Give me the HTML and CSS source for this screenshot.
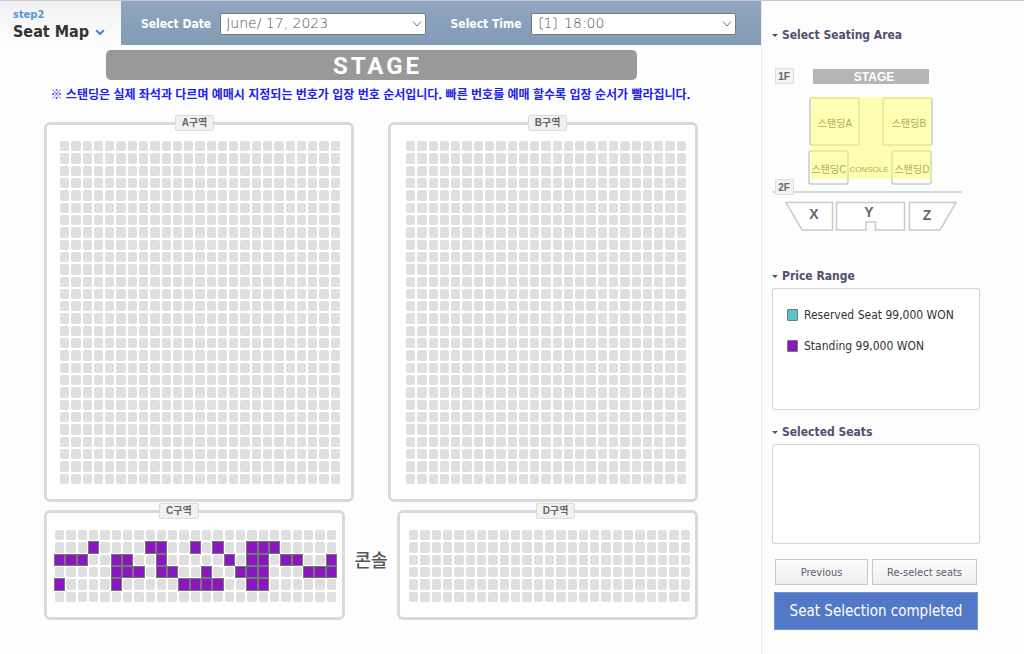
FILE: index.html
```html
<!DOCTYPE html>
<html lang="en">
<head>
<meta charset="utf-8">
<title>Seat Map</title>
<link rel="stylesheet" href="styles.css">
</head>
<body>
<div class="page">
  <main class="main">
    <header class="topbar">
      <h1 class="step">
        <span class="step-number">step2</span>
        <span class="step-title">Seat Map
          <svg class="step-arrow" viewBox="0 0 10 7" aria-hidden="true"><path d="M1.2 1.2 5 5l3.800-3.800" fill="none" stroke="#4a80cf" stroke-width="2"/></svg>
        </span>
      </h1>
      <form class="filters">
        <label class="filter-label" for="date">Select Date</label>
        <select class="filter-select" id="date"><option>June/ 17, 2023</option></select>
        <label class="filter-label" for="time">Select Time</label>
        <select class="filter-select" id="time"><option>〔1〕 18:00</option></select>
      </form>
    </header>

    <div class="stage">STAGE</div>
    <p class="notice" lang="ko">※ 스탠딩은 실제 좌석과 다르며 예매시 지정되는 번호가 입장 번호 순서입니다. 빠른 번호를 예매 할수록 입장 순서가 빨라집니다.</p>

    <div class="halls">
      <div class="hall-row hall-row-front">
        <section class="zone zone-large">
          <h2 class="zone-tag zone-tag-a" lang="ko">A구역</h2>
          <div class="seats seats-large" data-rows="28"></div>
        </section>
        <section class="zone zone-large zone-right">
          <h2 class="zone-tag zone-tag-b" lang="ko">B구역</h2>
          <div class="seats seats-large" data-rows="28"></div>
        </section>
      </div>
      <div class="hall-row">
        <section class="zone zone-small">
          <h2 class="zone-tag zone-tag-c" lang="ko">C구역</h2>
          <div class="seats seats-small" data-rows="6" data-open="1:3,8,9,12,14,17,18,19;2:0,1,2,5,6,9,15,17,18,20,21,24;3:5,6,7,9,10,13,16,17,18,22,23,24;4:0,5,11,12,13,14,17,18"></div>
        </section>
        <div class="console" lang="ko">콘솔</div>
        <section class="zone zone-small zone-small-right">
          <h2 class="zone-tag zone-tag-d" lang="ko">D구역</h2>
          <div class="seats seats-small" data-rows="6"></div>
        </section>
      </div>
    </div>
  </main>

  <aside class="sidebar">
    <h2 class="side-title">Select Seating Area</h2>
    <svg class="area-map" viewBox="0 0 194 172" role="img" aria-label="Seating areas">
      <rect x="41" y="5" width="116" height="15" fill="#b5b5b5"/>
      <text class="map-stage" x="102" y="17">STAGE</text>
      <g fill="#fff" stroke="#cacaca" stroke-width="1.500">
        <rect x="38" y="34" width="49" height="47" rx="2"/>
        <rect x="111" y="34" width="49" height="47" rx="2"/>
        <rect x="37" y="87" width="39" height="33" rx="2"/>
        <rect x="120" y="87" width="39" height="33" rx="2"/>
        <path d="M0 128H190"/>
        <path d="M14 138.500H60.500V166H30Z"/>
        <path d="M64.500 138.500H132.500V166H103.500V158H94V166H64.500Z"/>
        <path d="M137.500 138.500H184L168 166H137.500Z"/>
      </g>
      <g class="map-zone">
        <text x="63" y="63">스탠딩A</text>
        <text x="137" y="63">스탠딩B</text>
        <text x="57" y="109">스탠딩C</text>
        <text x="140" y="109">스탠딩D</text>
        <text class="map-console" x="97" y="108">CONSOLE</text>
      </g>
      <rect x="39" y="33" width="120" height="82" fill="#ffff64" opacity="0.500"/>
      <g class="map-block">
        <text x="42" y="155">X</text>
        <text x="97" y="153">Y</text>
        <text x="155" y="156">Z</text>
      </g>
      <g fill="#f2f2f2" stroke="#dedede">
        <rect x="3.500" y="4.500" width="18" height="15"/>
        <rect x="3.500" y="115.500" width="18" height="15"/>
      </g>
      <g class="map-floor">
        <text x="12" y="16">1F</text>
        <text x="12" y="127">2F</text>
      </g>
    </svg>

    <h2 class="side-title">Price Range</h2>
    <ul class="box prices">
      <li class="price"><span class="swatch swatch-reserved"></span>Reserved Seat 99,000 WON</li>
      <li class="price"><span class="swatch swatch-standing"></span>Standing 99,000 WON</li>
    </ul>

    <h2 class="side-title">Selected Seats</h2>
    <div class="box selected"></div>

    <div class="actions">
      <button class="btn btn-previous" type="button">Previous</button>
      <button class="btn btn-reselect" type="button">Re-select seats</button>
    </div>
    <button class="btn-complete" type="button">Seat Selection completed</button>
  </aside>
</div>
<script src="seats.js"></script>
</body>
</html>
```
FILE: styles.css
```css
* { box-sizing: border-box; }

body {
  margin: 0;
  background: #fdfdfd;
  color: #333;
  font-family: "DejaVu Sans Condensed", "DejaVu Sans", "Noto Sans CJK KR", sans-serif;
  font-size: 12px;
}

h1, h2, p, ul { margin: 0; padding: 0; }
button, select { font-family: inherit; }

.page {
  display: flex;
  min-height: 100vh;
  border-top: 1px solid #c9c9c9;
}

.main { flex: 1; min-width: 0; }

.topbar {
  display: flex;
  height: 44px;
  background: linear-gradient(#8fa5c1, #849bb4);
}

.step {
  width: 121px;
  padding: 7px 0 0 13px;
  background: linear-gradient(#f1f1f3, #fdfdfd);
  line-height: 16px;
}
.step-number { display: block; color: #5a94d0; font-size: 11px; line-height: 14px; }
.step-title { display: flex; align-items: center; gap: 6px; font-size: 16px; line-height: 20px; white-space: nowrap; }
.step-arrow { width: 10px; height: 7px; }

.filters { flex: 1; display: flex; align-items: center; padding: 1px 25px 0 20px; }
.filter-label { color: #fff; font-size: 12px; font-weight: bold; white-space: nowrap; }
.filter-select {
  flex: 1;
  min-width: 0;
  height: 22px;
  margin: 0 0 0 9px;
  padding: 0 24px 2px 5px;
  border: 1px solid #77797c;
  border-radius: 2px;
  appearance: none;
  color: #555;
  font-family: "DejaVu Sans Light", "DejaVu Sans", "Noto Sans CJK KR", sans-serif;
  font-size: 14px;
  font-weight: 200;
  font-feature-settings: "halt";
  background: #fff url("data:image/svg+xml,%3Csvg xmlns='http://www.w3.org/2000/svg' width='10' height='6'%3E%3Cpath d='M1 .5 5 5 9 .5' fill='none' stroke='%23777'/%3E%3C/svg%3E") no-repeat right 3px center;
}
.filter-select + .filter-label { margin-left: 25px; }

.stage {
  margin: 5px 124px 0 106px;
  border-radius: 5px;
  background: #999;
  color: #fff;
  font-family: Roboto, sans-serif;
  font-size: 24px;
  font-weight: bold;
  letter-spacing: 3px;
  line-height: 28px;
  padding: 2px 0 0 12px;
  text-align: center;
}

.notice {
  margin-top: 6px;
  padding-right: 20px;
  color: #2020f0;
  font-family: "Noto Sans CJK KR", sans-serif;
  font-size: 12px;
  font-weight: bold;
  line-height: 16px;
  text-align: center;
  white-space: nowrap;
}

.halls { padding: 20px 63px 0 44px; }
.hall-row { display: flex; justify-content: space-between; }
.hall-row-front { gap: 34px; margin-bottom: 8px; }

.zone { position: relative; border: 3px solid #d9d9d9; border-radius: 6px; background: #fff; }
.zone-large { flex: 1; padding: 16px 11px 15px 13px; }
.zone-large.zone-right { padding-right: 9px; padding-left: 15px; }
.zone-small { width: 46%; padding: 17px 6px 15px 8px; }
.zone-small-right { padding-right: 5px; padding-left: 9px; }

.zone-tag {
  position: absolute;
  top: -10px;
  padding: 0 6px;
  border: 1px solid #dcdcdc;
  border-radius: 2px;
  background: #f1f1f0;
  color: #666;
  font-family: "Liberation Sans", "Noto Sans CJK KR", sans-serif;
  font-size: 10px;
  line-height: 14px;
  white-space: nowrap;
}
.zone-tag-a { left: 42%; }
.zone-tag-b { left: 45%; }
.zone-tag-c { left: 38%; }
.zone-tag-d { left: 46%; }

.seats { display: grid; grid-template-columns: repeat(25, 1fr); grid-auto-rows: 1fr; gap: 2px; }
.seats-large { aspect-ratio: 280 / 343; }
.seats-small { aspect-ratio: 280 / 72; }
.seat { min-width: 0; min-height: 0; padding: 0; border: 0; border-radius: 2px; background: #dfdfdf; }
.seat-open { border-radius: 0; background: #8a16c0; box-shadow: 0 0 0 1px #777; }

.console { align-self: center; padding-bottom: 12px; color: #555; font-family: "Noto Sans CJK KR", sans-serif; font-size: 18px; font-weight: 500; line-height: 24px; }

.sidebar { width: 263px; padding: 26px 44px 24px 10px; border-left: 1px solid #ececee; }

.side-title {
  display: flex;
  align-items: center;
  gap: 4px;
  color: #4f506f;
  font-size: 12px;
  line-height: 16px;
}
.side-title::before { content: ""; border: 3px solid transparent; border-top-color: #4f506f; border-bottom-width: 0; }

.area-map { display: block; width: 194px; height: 172px; margin: 21px 0 32px; }
.map-stage, .map-zone, .map-block, .map-floor { font-family: "Liberation Sans", "Noto Sans CJK KR", sans-serif; text-anchor: middle; }
.map-stage { fill: #fff; font-size: 12px; font-weight: bold; }
.map-zone { fill: #555; font-size: 10px; }
.map-console { font-size: 8px; }
.map-block { fill: #666; font-size: 14px; font-weight: bold; }
.map-floor { fill: #666; font-size: 10px; font-weight: bold; }

.box { margin-top: 4px; border: 1px solid #d2d2d2; border-radius: 3px; background: #fff; }
.prices { min-height: 122px; margin-bottom: 14px; padding: 18px 14px; list-style: none; }
.price { display: flex; align-items: center; gap: 6px; margin-bottom: 15px; line-height: 16px; white-space: nowrap; }
.swatch { width: 11px; height: 12px; border: 1px solid #777; border-radius: 1px; }
.swatch-reserved { background: #56c5c8; }
.swatch-standing { background: #8a16c0; }
.selected { min-height: 100px; margin-bottom: 15px; }

.actions { display: flex; gap: 4px; padding: 0 3px; }
.btn { height: 26px; padding: 0; border: 1px solid #c3c9d0; background: linear-gradient(#fcfcfc, #eee); color: #5b5c72; font-size: 11px; white-space: nowrap; }
.btn-previous { flex: 92; }
.btn-reselect { flex: 104; }
.btn-complete { display: block; width: calc(100% - 4px); height: 38px; margin: 7px 2px 0; padding: 0; border: 1px solid #6f93dc; background: #5279c8; color: #fff; font-size: 15px; white-space: nowrap; }
```
FILE: seats.js
```js
const COLUMNS = 25;

document.querySelectorAll(".seats").forEach((grid) => {
  const open = new Set();
  (grid.dataset.open || "").split(";").filter(Boolean).forEach((entry) => {
    const [row, columns] = entry.split(":");
    columns.split(",").forEach((column) => open.add(row + "-" + column));
  });

  for (let row = 0; row < Number(grid.dataset.rows); row++) {
    for (let column = 0; column < COLUMNS; column++) {
      const available = open.has(row + "-" + column);
      const seat = document.createElement(available ? "button" : "span");
      seat.className = available ? "seat seat-open" : "seat";
      if (available) {
        seat.type = "button";
        seat.setAttribute("aria-label", "Row " + (row + 1) + ", seat " + (column + 1));
      }
      grid.append(seat);
    }
  }
});
```
